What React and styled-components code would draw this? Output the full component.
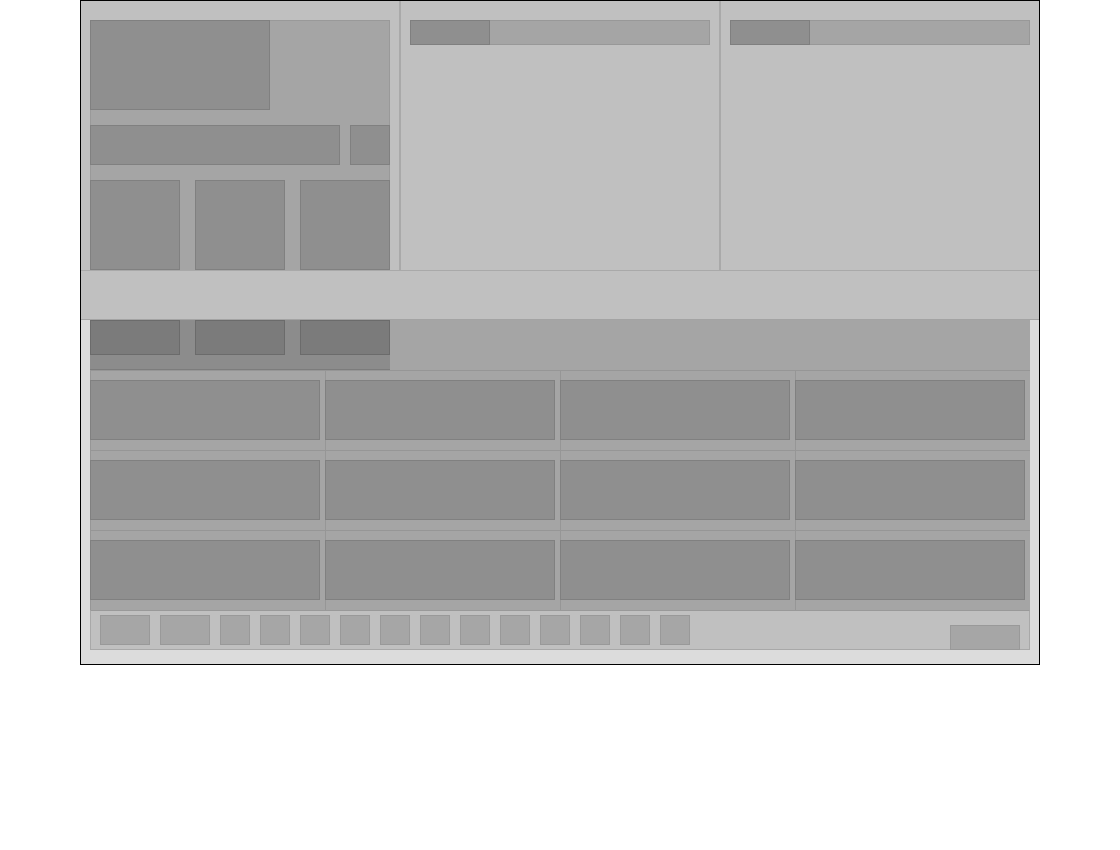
import React from "react";
import styled, { createGlobalStyle } from "styled-components";

const GlobalStyle = createGlobalStyle`
  html, body {
    margin: 0;
    padding: 0;
    background: #ffffff;
    font-family: "Liberation Sans", Arial, sans-serif;
  }
`;

const Frame = styled.div`
  width: 958px;
  height: 663px;
  margin-left: 80px;
  border: 1px solid #000;
  background: #dcdcdc;
  display: flex;
  flex-direction: column;
`;

const Header = styled.div`
  height: 269px;
  display: grid;
  grid-template-columns: 319px 320px 319px;
  background: #c0c0c0;
  flex-shrink: 0;
`;

const Column = styled.div`
  padding: 19px 9px 0 9px;
  border-left: ${(p) => (p.$first ? "none" : "1px solid #a9a9a9")};
  border-right: ${(p) => (p.$last ? "none" : "1px solid #a9a9a9")};
  box-sizing: border-box;
  overflow: hidden;
`;

const Panel = styled.div`
  width: 300px;
  height: 250px;
  box-sizing: border-box;
  background: #a5a5a5;
  border: 1px solid #999;
  border-bottom: none;
  display: flex;
  flex-direction: column;
  gap: 15px;
`;

const PanelRow = styled.div`
  display: flex;
  gap: ${(p) => p.$gap || 10}px;
  margin: ${(p) => (p.$top ? "-1px" : "0")} -1px 0 -1px;
`;

const Box = styled.div`
  width: ${(p) => p.$w}px;
  height: ${(p) => p.$h}px;
  box-sizing: border-box;
  background: ${(p) => (p.$dark ? "#7b7b7b" : "#8f8f8f")};
  border: 1px solid ${(p) => (p.$dark ? "#6b6b6b" : "#808080")};
  flex-shrink: 0;
`;

const Bar = styled.div`
  width: 300px;
  height: 25px;
  box-sizing: border-box;
  background: #a5a5a5;
  border: 1px solid #989898;
  display: flex;
`;

const BarFill = styled.div`
  width: 80px;
  height: 25px;
  margin: -1px 0 0 -1px;
  box-sizing: border-box;
  background: #8f8f8f;
  border: 1px solid #7f7f7f;
`;

const Band = styled.div`
  height: 48px;
  background: #c0c0c0;
  border-top: 1px solid #a9a9a9;
  border-bottom: 1px solid #a3a3a3;
  flex-shrink: 0;
`;

const Lower = styled.div`
  margin: 0 9px;
  display: flex;
  flex-direction: column;
`;

const Strip = styled.div`
  height: 50px;
  background: #a5a5a5;
  display: flex;
`;

const StripBlock = styled.div`
  width: 300px;
  height: 50px;
  box-sizing: border-box;
  background: #8c8c8c;
  border-bottom: 1px solid #7c7c7c;
  display: flex;
  gap: 15px;
`;

const Grid = styled.div`
  display: grid;
  grid-template-columns: repeat(4, 235px);
  grid-auto-rows: 80px;
  background: #a5a5a5;
`;

const Cell = styled.div`
  box-sizing: border-box;
  padding-top: 10px;
  box-shadow: inset 1px 1px 0 #969696;
`;

const Footer = styled.div`
  height: 40px;
  box-sizing: border-box;
  background: #c0c0c0;
  border: 1px solid #a8a8a8;
  border-top: 1px solid #999;
  display: flex;
  align-items: flex-start;
  padding: 4px 9px 0 9px;
  gap: 10px;
`;

const Btn = styled.div`
  width: ${(p) => p.$w}px;
  height: 30px;
  box-sizing: border-box;
  background: #a6a6a6;
  border: 1px solid #999;
  flex-shrink: 0;
`;

const Submit = styled.div`
  width: 70px;
  height: 25px;
  margin-left: auto;
  margin-top: 10px;
  box-sizing: border-box;
  background: #a6a6a6;
  border: 1px solid #999;
`;

const small = Array.from({ length: 12 });
const cells = Array.from({ length: 12 });

export default function App() {
  return (
    <>
      <GlobalStyle />
      <Frame>
        <Header>
          <Column $first>
            <Panel>
              <PanelRow $top>
                <Box $w={180} $h={90} />
              </PanelRow>
              <PanelRow>
                <Box $w={250} $h={40} />
                <Box $w={40} $h={40} />
              </PanelRow>
              <PanelRow $gap={15}>
                <Box $w={90} $h={90} />
                <Box $w={90} $h={90} />
                <Box $w={90} $h={90} />
              </PanelRow>
            </Panel>
          </Column>
          <Column>
            <Bar>
              <BarFill />
            </Bar>
          </Column>
          <Column $last>
            <Bar>
              <BarFill />
            </Bar>
          </Column>
        </Header>
        <Band />
        <Lower>
          <Strip>
            <StripBlock>
              <Box $dark $w={90} $h={35} />
              <Box $dark $w={90} $h={35} />
              <Box $dark $w={90} $h={35} />
            </StripBlock>
          </Strip>
          <Grid>
            {cells.map((_, i) => (
              <Cell key={i}>
                <Box $w={230} $h={60} />
              </Cell>
            ))}
          </Grid>
          <Footer>
            <Btn $w={50} />
            <Btn $w={50} />
            {small.map((_, i) => (
              <Btn key={i} $w={30} />
            ))}
            <Submit />
          </Footer>
        </Lower>
      </Frame>
    </>
  );
}
